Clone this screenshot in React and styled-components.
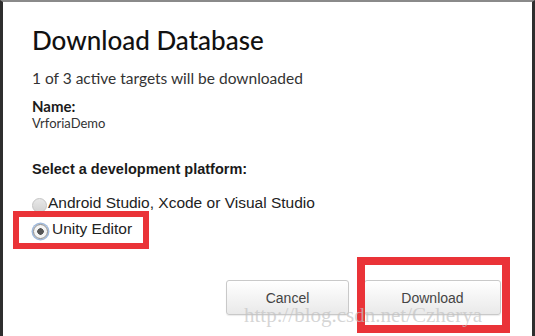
import React from "react";
import styled, { createGlobalStyle } from "styled-components";

const Global = createGlobalStyle`
  html, body {
    margin: 0;
    padding: 0;
    background: #ffffff;
  }
  #root {
    width: 535px;
    height: 336px;
  }
`;

const Dialog = styled.div`
  position: relative;
  box-sizing: border-box;
  width: 535px;
  height: 336px;
  overflow: hidden;
  background: #ffffff;
  border-top: 2px solid #8a8a8a;
  border-left: 3px solid #2e2e2e;
  border-right: 3px solid #2e2e2e;
  padding: 0 0 0 29px;
  font-family: "Lato", "Liberation Sans", sans-serif;
  color: #222;
`;

const Title = styled.h1`
  margin: 22px 0 0;
  font-size: 26px;
  line-height: 32px;
  font-weight: 500;
  color: #111;
`;

const Sub = styled.p`
  margin: 13px 0 0;
  font-size: 15.5px;
  line-height: 18px;
  color: #333;
`;

const Label = styled.div`
  margin-top: ${p => p.top || 0}px;
  font-family: ${p => (p.helv ? '"Liberation Sans", Arial, sans-serif' : '"Lato", sans-serif')};
  font-size: ${p => p.size || 15}px;
  line-height: 18px;
  font-weight: 700;
  color: #1a1a1a;
`;

const Value = styled.div`
  margin-top: 0;
  font-size: 13px;
  line-height: 16px;
  color: #333;
`;

const Options = styled.div`
  margin-top: 16px;
  display: flex;
  flex-direction: column;
  gap: 8px;
`;

const Option = styled.label`
  position: relative;
  display: flex;
  align-items: center;
  height: 18px;
  font-family: "Liberation Sans", Arial, sans-serif;
  font-size: 15.5px;
  color: #222;
`;

const Radio = styled.span`
  box-sizing: border-box;
  flex: none;
  width: 15px;
  height: 15px;
  margin: 4px ${p => (p.checked ? 4 : 1)}px 0 ${p => (p.checked ? 1 : 0)}px;
  border-radius: 50%;
  border: 1px solid ${p => (p.checked ? "#8a8a8a" : "#c4c4c4")};
  background: ${p =>
    p.checked
      ? "radial-gradient(circle, #555 0 3px, #f4f4f4 3.5px)"
      : "linear-gradient(#e8e8e8, #d2d2d2)"};
  box-shadow: ${p => (p.checked ? "0 0 0 1.5px #9fb9dc" : "none")};
`;

const Highlight = styled.span`
  position: absolute;
  box-sizing: border-box;
  border: ${p => p.thick}px solid #ea3338;
  pointer-events: none;
`;

const Actions = styled.div`
  position: absolute;
  right: 31px;
  top: 278px;
  display: flex;
  gap: 15px;
`;

const Button = styled.button`
  position: relative;
  box-sizing: border-box;
  width: ${p => p.w}px;
  height: 35px;
  border: 1px solid #c9c9c9;
  border-radius: 3px;
  background: linear-gradient(#ffffff, #e9e9e9);
  box-shadow: 0 1px 1px rgba(0, 0, 0, 0.08);
  font-family: "Liberation Sans", Arial, sans-serif;
  font-size: 14px;
  color: #444;
  padding: 0;
`;

const Watermark = styled.div`
  position: absolute;
  left: 241px;
  top: 301px;
  font-family: "Liberation Serif", "Times New Roman", serif;
  font-size: 21px;
  color: rgba(195, 195, 195, 0.7);
  white-space: nowrap;
  pointer-events: none;
`;

export default function App() {
  return (
    <>
      <Global />
      <Dialog>
        <Title>Download Database</Title>
        <Sub>1 of 3 active targets will be downloaded</Sub>
        <Label top={10}>Name:</Label>
        <Value>VrforiaDemo</Value>
        <Label top={29} helv size={14.5}>Select a development platform:</Label>
        <Options>
          <Option>
            <Radio />
            Android Studio, Xcode or Visual Studio
          </Option>
          <Option>
            <Radio checked />
            Unity Editor
            <Highlight thick={6} style={{ left: -19, top: -9, width: 136, height: 38 }} />
          </Option>
        </Options>
        <Actions>
          <Button w={123}>Cancel</Button>
          <Button w={137}>
            Download
            <Highlight thick={8} style={{ left: -8, top: -24, width: 153, height: 76 }} />
          </Button>
        </Actions>
        <Watermark>http://blog.csdn.net/Czherya</Watermark>
      </Dialog>
    </>
  );
}
